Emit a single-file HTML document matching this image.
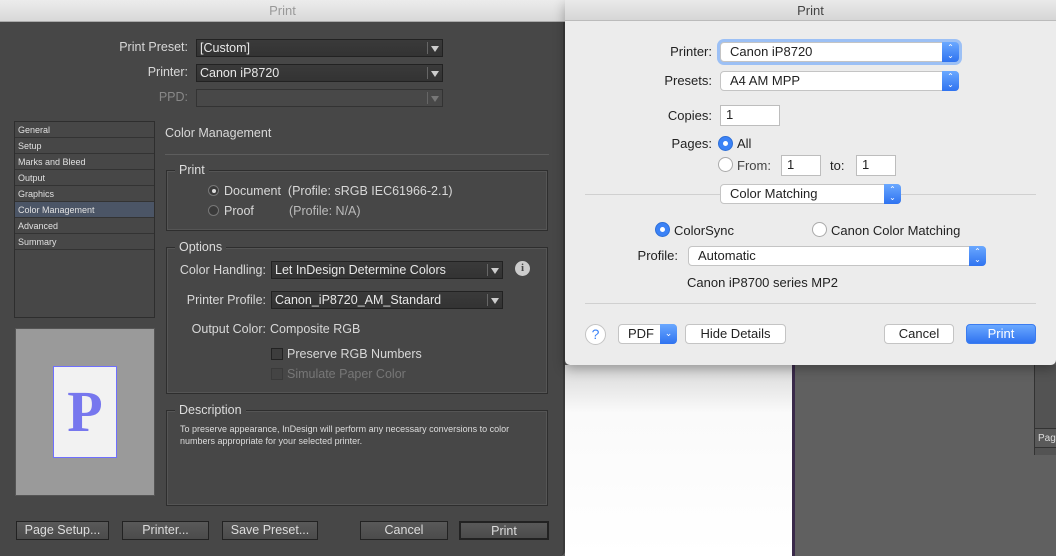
<!DOCTYPE html>
<html><head><meta charset="utf-8"><style>
*{margin:0;padding:0;box-sizing:border-box}
body{width:1056px;height:556px;overflow:hidden;position:relative;background:#606060;font-family:"Liberation Sans",sans-serif;}
.a{position:absolute;white-space:nowrap}
.L{color:#d8d8d8;font-size:12.5px}
.sel{position:absolute;background:linear-gradient(#3a3a3a,#333);border:1px solid #222;color:#e8e8e8;font-size:12.5px;padding:1px 3px;line-height:15px}
.sel:after{content:"";position:absolute;right:14px;top:2px;bottom:2px;border-left:1px solid #666}
.sel i{position:absolute;right:3px;top:6px;border-left:4px solid transparent;border-right:4px solid transparent;border-top:6px solid #ccc}
.grp{position:absolute;border:1px solid #2e2e2e;box-shadow:inset 0 0 0 1px #555}
.gt{position:absolute;background:#474747;color:#ddd;font-size:12.5px;padding:0 4px}
.side{position:absolute;left:14px;top:121px;width:141px;height:197px;border:1px solid #2e2e2e;background:#474747}
.side div{height:16px;border-bottom:1px solid #333;font-size:9px;color:#e0e0e0;padding:3px 0 0 3px}
.btn{position:absolute;top:521px;height:19px;border:1px solid #222;background:linear-gradient(#595959,#4b4b4b);color:#ddd;font-size:12.5px;text-align:center;line-height:17px}
.mac{color:#222;font-size:13px}
.ms{position:absolute;background:#fff;border:1px solid #c4c4c4;border-radius:4px;font-size:13px;color:#222;padding-left:9px;line-height:18px}
.ms b{position:absolute;right:-1px;top:-1px;bottom:-1px;width:17px;background:linear-gradient(#6aa8ff,#2f73f0);border-radius:0 4px 4px 0;color:#fff;font-size:8px;font-weight:normal;text-align:center;line-height:8px;padding-top:2px}
.mi{position:absolute;background:#fff;border:1px solid #bdbdbd;font-size:13px;color:#222;padding-left:5px;line-height:18px}
.rad{position:absolute;width:15px;height:15px;border-radius:50%;border:1px solid #aaa;background:#fff}
.rad.on{background:#3b82f6;border-color:#2d6fd8}
.rad.on:after{content:"";position:absolute;left:4px;top:4px;width:5px;height:5px;border-radius:50%;background:#fff}
.mb{position:absolute;top:324px;height:20px;background:#fff;border:1px solid #c4c4c4;border-radius:4px;font-size:13px;color:#222;text-align:center;line-height:18px}
</style></head><body>
<div class="a" style="left:565px;top:365px;width:228px;height:191px;background:linear-gradient(#d8d8d8,#fafafa 25%,#fff)"></div>
<div class="a" style="left:792px;top:365px;width:3px;height:191px;background:#3a2a4a"></div>
<div class="a" style="left:1034px;top:365px;width:22px;height:90px;background:#535353;border-left:1px solid #333"></div>
<div class="a" style="left:1035px;top:428px;width:21px;height:20px;background:#5a5a5a;border-top:1px solid #333;border-bottom:1px solid #333;color:#ddd;font-size:10px;padding:4px 0 0 3px">Pag</div>

<div class="a" style="left:0;top:0;width:565px;height:556px;background:#474747;border-right:2px solid #3a3a3a;border-radius:0 0 5px 0"></div>
<div class="a" style="left:0;top:0;width:565px;height:22px;background:linear-gradient(#ececec,#d8d8d8);border-bottom:1px solid #aaa;color:#999;font-size:13px;text-align:center;line-height:22px">Print</div>

<div class="a L" style="right:868px;top:40px">Print Preset:</div>
<div class="sel" style="left:196px;top:39px;width:247px;height:18px">[Custom]<i></i></div>
<div class="a L" style="right:868px;top:65px">Printer:</div>
<div class="sel" style="left:196px;top:64px;width:247px;height:18px">Canon iP8720<i></i></div>
<div class="a L" style="right:868px;top:90px;color:#888">PPD:</div>
<div class="sel" style="left:196px;top:89px;width:247px;height:18px;background:#484848;border-color:#333"><i style="border-top-color:#777"></i></div>

<div class="side"><div>General</div><div>Setup</div><div>Marks and Bleed</div><div>Output</div><div>Graphics</div><div style="background:#4b5566">Color Management</div><div>Advanced</div><div>Summary</div></div>

<div class="a" style="left:15px;top:328px;width:140px;height:168px;background:#9a9a9a;border:1px solid #555"></div>
<div class="a" style="left:53px;top:366px;width:64px;height:92px;background:#f2f2f2;border:1px solid #6f6fff;color:#7777ee;font-family:'Liberation Serif',serif;font-size:58px;font-weight:bold;text-align:center;line-height:90px">P</div>

<div class="a L" style="left:165px;top:126px;font-size:12.5px">Color Management</div>
<div class="a" style="left:165px;top:154px;width:384px;height:1px;background:#5d5d5d"></div>

<div class="grp" style="left:166px;top:170px;width:382px;height:61px"></div>
<div class="gt" style="left:175px;top:163px">Print</div>
<div class="rad" style="left:208px;top:185px;width:11px;height:11px;background:#3a3a3a;border-color:#777"></div>
<div class="a" style="left:212px;top:189px;width:4px;height:4px;border-radius:50%;background:#ddd"></div>
<div class="a L" style="left:224px;top:184px">Document&nbsp; (Profile: sRGB IEC61966-2.1)</div>
<div class="rad" style="left:208px;top:205px;width:11px;height:11px;background:#3a3a3a;border-color:#777"></div>
<div class="a L" style="left:224px;top:204px">Proof</div>
<div class="a L" style="left:289px;top:204px;color:#bbb">(Profile: N/A)</div>

<div class="grp" style="left:166px;top:247px;width:382px;height:147px"></div>
<div class="gt" style="left:175px;top:240px">Options</div>
<div class="a L" style="right:790px;top:263px">Color Handling:</div>
<div class="sel" style="left:271px;top:261px;width:232px;height:18px">Let InDesign Determine Colors<i></i></div>
<div class="a" style="left:515px;top:261px;width:15px;height:15px;border-radius:50%;background:#ccc;color:#474747;font:bold 11px 'Liberation Serif',serif;text-align:center;line-height:15px">i</div>
<div class="a L" style="right:790px;top:293px">Printer Profile:</div>
<div class="sel" style="left:271px;top:291px;width:232px;height:18px">Canon_iP8720_AM_Standard<i></i></div>
<div class="a L" style="right:790px;top:322px">Output Color:</div>
<div class="a L" style="left:270px;top:322px">Composite RGB</div>
<div class="a" style="left:271px;top:348px;width:12px;height:12px;background:#3d3d3d;border:1px solid #222"></div>
<div class="a L" style="left:287px;top:347px">Preserve RGB Numbers</div>
<div class="a" style="left:271px;top:368px;width:12px;height:12px;background:#444;border:1px solid #3a3a3a"></div>
<div class="a L" style="left:287px;top:367px;color:#777">Simulate Paper Color</div>

<div class="grp" style="left:166px;top:410px;width:382px;height:96px"></div>
<div class="gt" style="left:175px;top:403px">Description</div>
<div class="a" style="left:180px;top:423px;width:347px;overflow:hidden;color:#ddd;font-size:9px;line-height:12px">To preserve appearance, InDesign will perform any necessary conversions to color<br>numbers appropriate for your selected printer.</div>

<div class="btn" style="left:16px;width:93px">Page Setup...</div>
<div class="btn" style="left:122px;width:87px">Printer...</div>
<div class="btn" style="left:222px;width:96px">Save Preset...</div>
<div class="btn" style="left:360px;width:88px">Cancel</div>
<div class="btn" style="left:459px;width:90px;border:2px solid #222">Print</div>

<div class="a" style="left:565px;top:0;width:491px;height:365px;background:#ececec;border-radius:0 0 5px 5px;box-shadow:0 4px 12px rgba(0,0,0,.3)"></div>
<div class="a" style="left:565px;top:0;width:491px;height:21px;background:linear-gradient(#eaeaea,#d6d6d6);border-bottom:1px solid #bbb;color:#444;font-size:13px;text-align:center;line-height:21px">Print</div>

<div class="a mac" style="right:344px;top:44px">Printer:</div>
<div class="ms" style="left:720px;top:42px;width:239px;height:20px;box-shadow:0 0 0 3px #9cc0f5">Canon iP8720<b>⌃<br>⌄</b></div>
<div class="a mac" style="right:344px;top:73px">Presets:</div>
<div class="ms" style="left:720px;top:71px;width:239px;height:20px">A4 AM MPP<b>⌃<br>⌄</b></div>
<div class="a mac" style="right:344px;top:108px">Copies:</div>
<div class="mi" style="left:720px;top:105px;width:60px;height:21px">1</div>
<div class="a mac" style="right:344px;top:136px">Pages:</div>
<div class="rad on" style="left:718px;top:136px"></div>
<div class="a mac" style="left:737px;top:136px">All</div>
<div class="rad" style="left:718px;top:157px"></div>
<div class="a mac" style="left:737px;top:158px;color:#444">From:</div>
<div class="mi" style="left:781px;top:155px;width:40px;height:21px">1</div>
<div class="a mac" style="left:830px;top:158px">to:</div>
<div class="mi" style="left:856px;top:155px;width:40px;height:21px">1</div>
<div class="a" style="left:585px;top:194px;width:451px;height:1px;background:#d0d0d0"></div>
<div class="ms" style="left:720px;top:184px;width:181px;height:20px">Color Matching<b>⌃<br>⌄</b></div>
<div class="rad on" style="left:655px;top:222px"></div>
<div class="a mac" style="left:674px;top:223px">ColorSync</div>
<div class="rad" style="left:812px;top:222px"></div>
<div class="a mac" style="left:831px;top:223px">Canon Color Matching</div>
<div class="a mac" style="right:378px;top:248px">Profile:</div>
<div class="ms" style="left:688px;top:246px;width:298px;height:20px">Automatic<b>⌃<br>⌄</b></div>
<div class="a mac" style="left:687px;top:275px">Canon iP8700 series MP2</div>
<div class="a" style="left:585px;top:303px;width:451px;height:1px;background:#d0d0d0"></div>
<div class="a" style="left:585px;top:324px;width:21px;height:21px;border-radius:50%;background:#fff;border:1px solid #c4c4c4;color:#3b82f6;font-size:14px;text-align:center;line-height:19px">?</div>
<div class="mb" style="left:618px;width:59px;text-align:left;padding-left:9px">PDF<span style="position:absolute;right:-1px;top:-1px;bottom:-1px;width:17px;background:linear-gradient(#6aa8ff,#2f73f0);border-radius:0 4px 4px 0;color:#fff;font-size:9px;text-align:center">⌄</span></div>
<div class="mb" style="left:685px;width:101px">Hide Details</div>
<div class="mb" style="left:884px;width:70px">Cancel</div>
<div class="mb" style="left:966px;width:70px;background:linear-gradient(#6aa8ff,#2f73f0);border-color:#3b7cf0;color:#fff">Print</div>
</body></html>
